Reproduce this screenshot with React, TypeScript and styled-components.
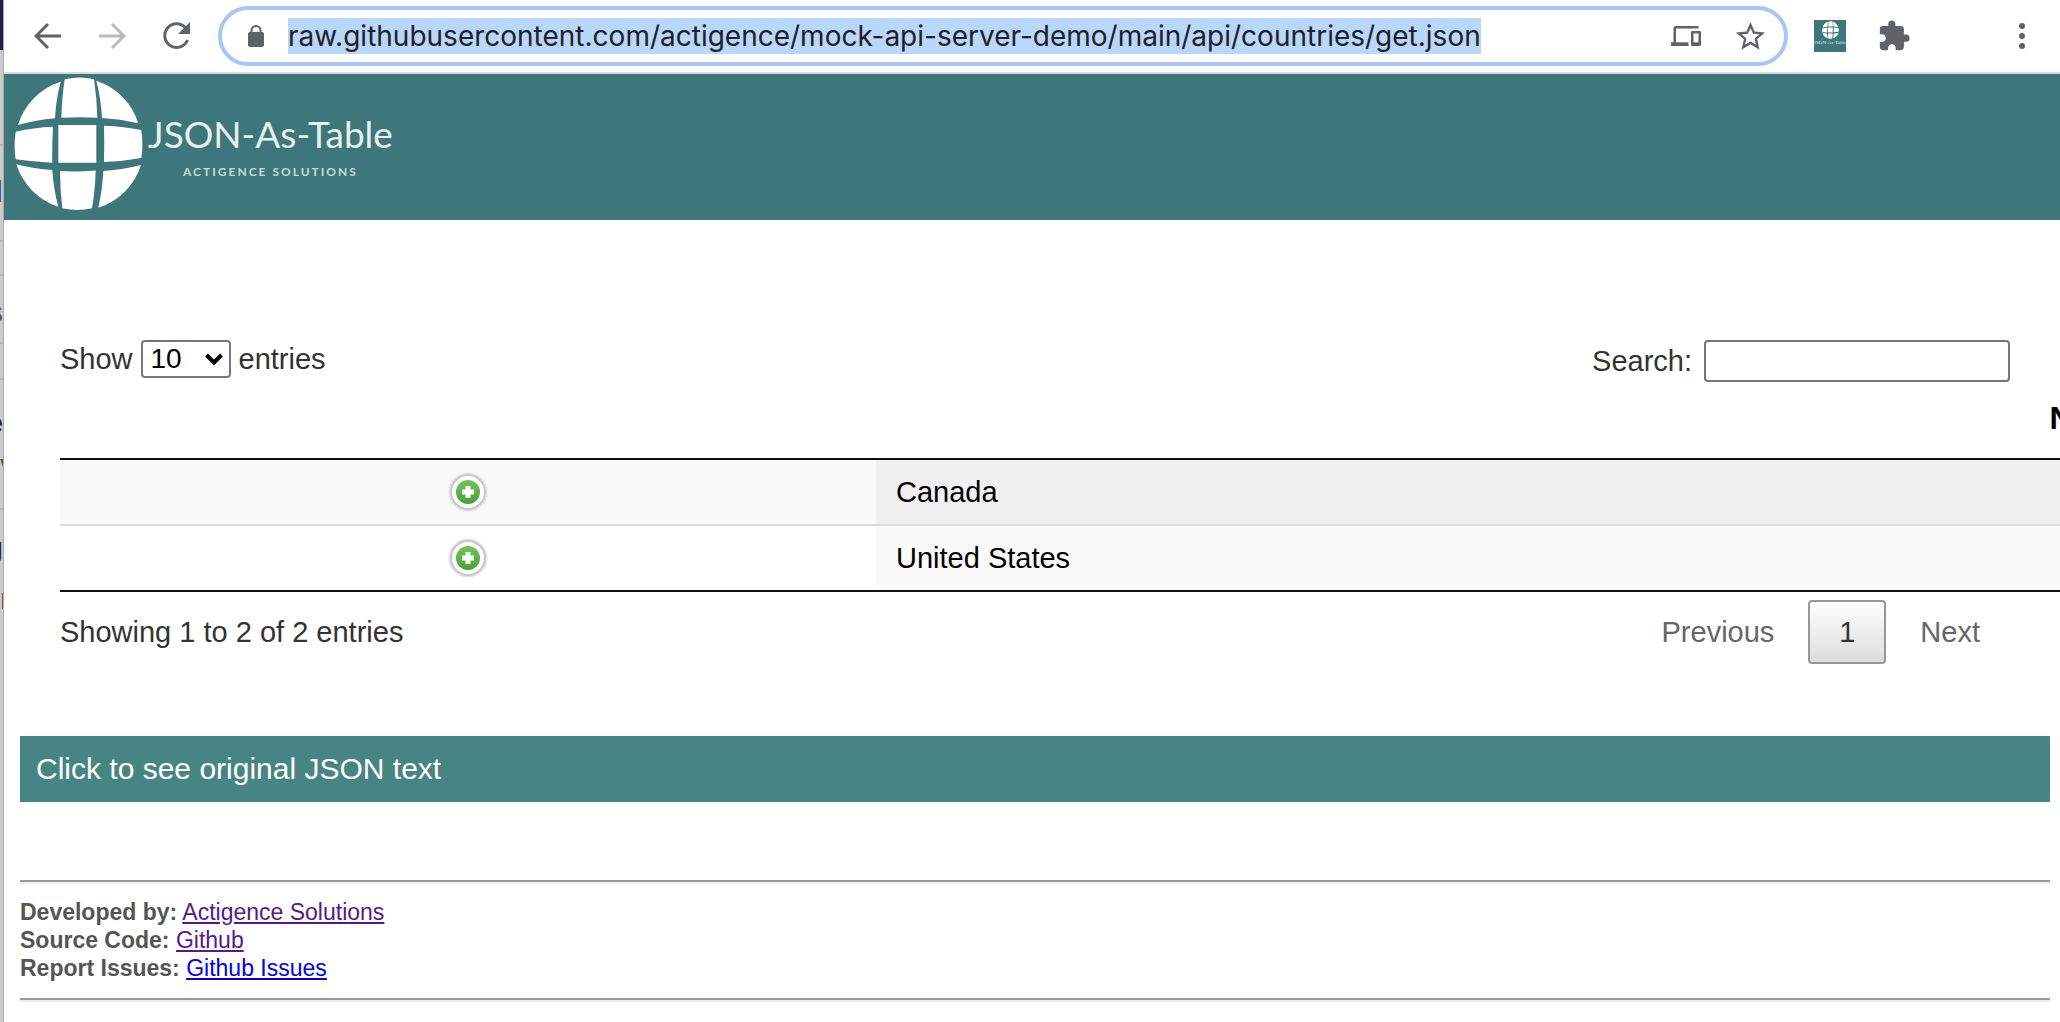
import React from "react";
import styled, { createGlobalStyle } from "styled-components";

const sans = `"Liberation Sans", Arial, Helvetica, sans-serif`;

const GlobalStyle = createGlobalStyle`
  *, *::before, *::after { box-sizing: border-box; }
  body { margin: 0; background: #fff; font-family: ${sans}; overflow: hidden; }
  button, input, select { font-family: inherit; }
`;

const Screen = styled.div`
  display: flex;
  min-height: 100vh;
`;

const Backdrop = styled.div`
  width: 4px;
  flex: none;
  overflow: hidden;
  display: flex;
  flex-direction: column;
  background: #cbcbcb;
  border-right: 1px solid #aaa;
`;

const BackdropCap = styled.div`
  flex: none;
  height: 50px;
  background: #1f1f4d;
`;

const BackdropRow = styled.div<{ $height: number; $bold?: boolean; $line?: boolean; $start?: boolean }>`
  flex: none;
  height: ${(p) => p.$height}px;
  display: flex;
  align-items: flex-end;
  justify-content: ${(p) => (p.$start ? "flex-start" : "flex-end")};
  font-size: 30px;
  line-height: 30px;
  font-weight: ${(p) => (p.$bold ? 700 : 400)};
  color: ${(p) => (p.$bold ? "#222" : "#555")};
  border-bottom: ${(p) => (p.$line ? "2px solid #b8b8b8" : "0")};
`;

const Window = styled.div`
  flex: 1;
  min-width: 0;
  display: flex;
  flex-direction: column;
  overflow: hidden;
`;

const Toolbar = styled.header`
  display: flex;
  align-items: center;
  height: 74px;
  padding: 0 18px 0 24px;
  border-bottom: 2px solid #d8dade;
`;

const IconButton = styled.button<{ $dim?: boolean }>`
  display: flex;
  align-items: center;
  justify-content: center;
  width: 40px;
  height: 40px;
  padding: 0;
  border: 0;
  background: none;
  color: ${(p) => (p.$dim ? "#bababc" : "#5f6368")};
`;

const NavButtons = styled.nav`
  display: flex;
  gap: 24px;
  margin-right: 22px;
`;

const AddressBar = styled.div`
  flex: 1;
  display: flex;
  align-items: center;
  height: 60px;
  padding: 0 14px 0 26px;
  border: 4px solid #a8c4f8;
  border-radius: 30px;
`;

const AddressInput = styled.input`
  field-sizing: content;
  height: 36px;
  margin: 0 auto 0 24px;
  padding: 0;
  border: 0;
  outline: 0;
  background: #b9d6fb;
  color: #202124;
  font-family: Inter, Roboto, sans-serif;
  font-size: 28px;
  line-height: 36px;
`;

const AddressActions = styled.div`
  display: flex;
  gap: 24px;
`;

const Extensions = styled.div`
  display: flex;
  align-items: center;
  gap: 28px;
  margin: 0 88px 0 26px;
`;

const ExtensionBadge = styled.span`
  display: flex;
  flex-direction: column;
  align-items: center;
  width: 32px;
  height: 32px;
  padding-top: 1px;
  background: #3e777b;
  color: #dfe9e9;
  font-family: "Liberation Serif", serif;
  font-size: 5px;
  line-height: 8px;
  white-space: nowrap;
`;

const Banner = styled.div`
  display: flex;
  align-items: center;
  gap: 4px;
  height: 146px;
  padding: 0 0 6px 10px;
  background: #3e777b;
  color: #fff;
`;

const Brand = styled.div`
  display: flex;
  flex-direction: column;
  align-items: center;
  gap: 8px;
  padding-top: 8px;
`;

const BrandName = styled.div`
  font-family: Lato, sans-serif;
  font-weight: 400;
  font-size: 37px;
  line-height: 40px;
  color: #e8f0f0;
`;

const BrandTag = styled.div`
  font-family: Lato, sans-serif;
  font-weight: 700;
  font-size: 12px;
  line-height: 20px;
  letter-spacing: 2px;
  color: #c8dada;
`;

const Content = styled.main`
  padding: 120px 10px 0 16px;
`;

const TableArea = styled.section`
  padding: 0 40px;
`;

const Controls = styled.div`
  display: flex;
  justify-content: space-between;
  align-items: flex-start;
  font-size: 29px;
  color: #333;
`;

const LengthControl = styled.label`
  display: flex;
  align-items: center;
  gap: 8px;
  line-height: 36px;
`;

const SelectBox = styled.span`
  display: inline-grid;
  align-items: center;
  color: #000;
  & > * { grid-area: 1 / 1; }
  & > svg { justify-self: end; margin-right: 8px; pointer-events: none; }
`;

const LengthSelect = styled.select`
  appearance: none;
  width: 90px;
  height: 38px;
  padding: 0 8px;
  border: 2px solid #767676;
  border-radius: 4px;
  background: #fff;
  color: #000;
  font-size: 28px;
  line-height: 34px;
`;

const SearchControl = styled.label`
  display: flex;
  align-items: center;
  gap: 12px;
`;

const SearchInput = styled.input`
  width: 306px;
  height: 42px;
  border: 2px solid #767676;
  border-radius: 4px;
  font-size: 29px;
`;

const DataTable = styled.table`
  width: 3250px;
  table-layout: fixed;
  border-collapse: separate;
  border-spacing: 0;
  border-bottom: 2px solid #111;
  color: #000;
  font-size: 29px;
  line-height: 32px;
`;

const HeadCell = styled.th`
  padding: 16px 36px 20px;
  border-bottom: 2px solid #111;
  font-size: 32px;
  line-height: 40px;
  text-align: center;
`;

const Row = styled.tr`
  & > td { padding: 16px 20px; }
  &:nth-child(odd) > td { background: #f0f0f0; }
  &:nth-child(odd) > td:first-child { background: #f9f9f9; }
  &:nth-child(even) > td { background: #fafafa; }
  &:nth-child(even) > td:first-child { background: #fff; }
  & + & > td { border-top: 2px solid #ddd; }
`;

const ExpandButton = styled.button`
  display: block;
  width: 40px;
  height: 40px;
  margin: -4px auto;
  padding: 0;
  border: 0;
  background: none;
`;

const TableFooter = styled.div`
  display: flex;
  justify-content: space-between;
  align-items: center;
  padding-top: 8px;
  color: #333;
  font-size: 29px;
`;

const Pagination = styled.div`
  display: flex;
  gap: 4px;
`;

const PageButton = styled.button<{ $current?: boolean }>`
  min-width: 78px;
  height: 64px;
  padding: 0 28px;
  border: 2px solid ${(p) => (p.$current ? "#979797" : "transparent")};
  border-radius: 4px;
  background: ${(p) => (p.$current ? "linear-gradient(#fff, #dcdcdc)" : "none")};
  color: ${(p) => (p.$current ? "#333" : "#666")};
  font-size: 29px;
`;

const JsonToggle = styled.button`
  display: block;
  width: 100%;
  margin: 72px 0 78px;
  padding: 16px;
  border: 0;
  background: #478584;
  color: #fff;
  font-size: 30px;
  line-height: 34px;
  text-align: left;
`;

const Rule = styled.hr`
  height: 4px;
  margin: 0;
  border: 0;
  border-top: 2px solid #999;
  background: #eee;
`;

const Credits = styled.div`
  padding: 14px 0 16px;
  color: #555;
  font-size: 23px;
  line-height: 28px;
`;

const CreditLink = styled.a<{ $visited?: boolean }>`
  color: ${(p) => (p.$visited ? "#551a8b" : "#0000ee")};
`;

const Globe = ({ width, height }: { width: number; height: number }) => (
  <svg width={width} height={height} viewBox="0 0 130 134" fill="#fff" aria-hidden="true">
    <path d="M46.700 4.700 A64.500 66 0 0 0 4 48 Q22 43 41 41.300 Q42 22 46.700 4.700Z" />
    <path d="M50.700 2.300 A64.500 66 0 0 1 80 2.300 Q83 22 83.300 40.700 Q66 39.700 47.300 40.700 Q48 20 50.700 2.300Z" />
    <path d="M82.300 3.700 A64.500 66 0 0 1 124.300 46.300 Q106 42 88 41 Q87 22 82.300 3.700Z" />
    <path d="M1.700 54.700 Q20 50.500 39 49.700 Q38 68 38.300 85.700 Q20 85 1.700 82.300 Q-0.500 69 1.700 54.700Z" />
    <path d="M44.300 48 H82.300 V85.700 H44.300Z" />
    <path d="M90 48.700 Q110 49.500 127.300 53 Q129.500 68 127.300 81 Q108 84.500 90 85 Q90.500 66 90 48.700Z" />
    <path d="M2.300 87.300 Q20 92 38.300 93 Q39.500 112 44.300 129.700 A64.500 66 0 0 1 2.300 87.300Z" />
    <path d="M46 94 Q64 95 81.700 93.500 Q81 114 78 131.300 A64.500 66 0 0 1 48.300 131.300 Q46 112 46 94Z" />
    <path d="M89.300 94 Q110 92.500 127 88 A64.500 66 0 0 1 84.300 130.700 Q88.500 112 89.300 94Z" />
  </svg>
);

const PlusIcon = () => (
  <svg width="40" height="40" viewBox="0 0 40 40" aria-hidden="true">
    <defs>
      <linearGradient id="plusGreen" x1="0" y1="0" x2="0" y2="1">
        <stop offset="0" stopColor="#72c35a" />
        <stop offset="1" stopColor="#4b9f38" />
      </linearGradient>
    </defs>
    <circle cx="20" cy="20" r="18" fill="#fff" stroke="#e4e4e4" strokeWidth="3" />
    <circle cx="20" cy="20" r="17" fill="none" stroke="#c9c9c9" strokeWidth="2" />
    <circle cx="20" cy="20" r="12" fill="url(#plusGreen)" />
    <path d="M20 14v12M14 20h12" stroke="#fff" strokeWidth="5" />
  </svg>
);

const countries = ["Canada", "United States"];

const credits = [
  { label: "Developed by:", link: "Actigence Solutions", visited: true },
  { label: "Source Code:", link: "Github", visited: true },
  { label: "Report Issues:", link: "Github Issues", visited: false },
];

export default function App() {
  return (
    <>
      <GlobalStyle />
      <Screen>
        <Backdrop aria-hidden="true">
          <BackdropCap />
          <BackdropRow $height={96} $line />
          <BackdropRow $height={61}>d</BackdropRow>
          <BackdropRow $height={35} $line />
          <BackdropRow $height={34} $line />
          <BackdropRow $height={51}>s</BackdropRow>
          <BackdropRow $height={17} $line />
          <BackdropRow $height={36} $line />
          <BackdropRow $height={58} $bold>e</BackdropRow>
          <BackdropRow $height={42} $start>v</BackdropRow>
          <BackdropRow $height={30} $line />
          <BackdropRow $height={53} $bold>g</BackdropRow>
          <BackdropRow $height={51} $start>r</BackdropRow>
        </Backdrop>
        <Window>
          <Toolbar>
            <NavButtons>
              <IconButton aria-label="Back">
                <svg width="28" height="28" viewBox="0 0 28 28" fill="none" stroke="currentColor" strokeWidth="3">
                  <path d="M27 14H3M14 2L2 14L14 26" />
                </svg>
              </IconButton>
              <IconButton aria-label="Forward" $dim>
                <svg width="28" height="28" viewBox="0 0 28 28" fill="none" stroke="currentColor" strokeWidth="3">
                  <path d="M1 14H25M14 2L26 14L14 26" />
                </svg>
              </IconButton>
              <IconButton aria-label="Reload">
                <svg width="28" height="28" viewBox="0 0 28 28" fill="none">
                  <path d="M23.500 6 A11.800 11.800 0 1 0 25.500 18" stroke="currentColor" strokeWidth="3" />
                  <path d="M28 0V12H16Z" fill="currentColor" />
                </svg>
              </IconButton>
            </NavButtons>
            <AddressBar>
              <svg width="16" height="22" viewBox="0 0 16 22" aria-hidden="true">
                <path d="M3.500 9V5.500a4.500 4.500 0 0 1 9 0V9" fill="none" stroke="#5f6368" strokeWidth="2" />
                <rect y="7" width="16" height="15" rx="2" fill="#5f6368" />
              </svg>
              <AddressInput
                aria-label="Address"
                defaultValue="raw.githubusercontent.com/actigence/mock-api-server-demo/main/api/countries/get.json"
              />
              <AddressActions>
                <IconButton aria-label="Send to your devices">
                  <svg width="30" height="30" viewBox="0 0 24 24" fill="currentColor">
                    <path d="M4 6h18V4H4c-1.100 0-2 .9-2 2v11H0v3h14v-3H4V6zm19 2h-6c-.55 0-1 .45-1 1v10c0 .55.45 1 1 1h6c.55 0 1-.45 1-1V9c0-.55-.45-1-1-1zm-1 9h-4v-7h4v7z" />
                  </svg>
                </IconButton>
                <IconButton aria-label="Bookmark this page">
                  <svg width="35" height="35" viewBox="0 0 24 24" fill="currentColor">
                    <path d="M22 9.240l-7.190-.62L12 2 9.190 8.630 2 9.240l5.460 4.730L5.820 21 12 17.270 18.180 21l-1.630-7.030L22 9.240zM12 15.400l-3.760 2.270 1-4.280-3.320-2.880 4.380-.38L12 6.100l1.710 4.040 4.380.38-3.320 2.880 1 4.280L12 15.400z" />
                  </svg>
                </IconButton>
              </AddressActions>
            </AddressBar>
            <Extensions>
              <ExtensionBadge>
                <Globe width={17} height={18} />
                JSON-As-Table
              </ExtensionBadge>
              <IconButton aria-label="Extensions">
                <svg width="34" height="34" viewBox="0 0 24 24" fill="currentColor">
                  <path d="M20.500 11H19V7c0-1.100-.9-2-2-2h-4V3.500a2.500 2.500 0 0 0-5 0V5H4c-1.100 0-1.990.9-1.990 2v3.800H3.500c1.490 0 2.700 1.210 2.700 2.700s-1.210 2.700-2.700 2.700H2V20c0 1.100.9 2 2 2h3.800v-1.500c0-1.490 1.210-2.700 2.700-2.700s2.700 1.210 2.700 2.700V22H17c1.100 0 2-.9 2-2v-4h1.500a2.500 2.500 0 0 0 0-5z" />
                </svg>
              </IconButton>
            </Extensions>
            <IconButton aria-label="Menu">
              <svg width="8" height="28" viewBox="0 0 8 28" fill="currentColor">
                <circle cx="4" cy="4" r="3" />
                <circle cx="4" cy="14" r="3" />
                <circle cx="4" cy="24" r="3" />
              </svg>
            </IconButton>
          </Toolbar>
          <Banner>
            <Globe width={130} height={134} />
            <Brand>
              <BrandName>JSON-As-Table</BrandName>
              <BrandTag>ACTIGENCE SOLUTIONS</BrandTag>
            </Brand>
          </Banner>
          <Content>
            <TableArea>
              <Controls>
                <LengthControl>
                  Show
                  <SelectBox>
                    <LengthSelect defaultValue="10">
                      <option>10</option>
                      <option>25</option>
                      <option>50</option>
                    </LengthSelect>
                    <svg width="18" height="12" viewBox="0 0 18 12" fill="none" stroke="#000" strokeWidth="4">
                      <path d="M1.500 2L9 9.500L16.500 2" />
                    </svg>
                  </SelectBox>
                  entries
                </LengthControl>
                <SearchControl>
                  Search:
                  <SearchInput type="search" />
                </SearchControl>
              </Controls>
              <DataTable>
                <colgroup>
                  <col style={{ width: 816 }} />
                  <col />
                </colgroup>
                <thead>
                  <tr>
                    <HeadCell />
                    <HeadCell>Name</HeadCell>
                  </tr>
                </thead>
                <tbody>
                  {countries.map((name) => (
                    <Row key={name}>
                      <td>
                        <ExpandButton aria-label={`Expand ${name}`}>
                          <PlusIcon />
                        </ExpandButton>
                      </td>
                      <td>{name}</td>
                    </Row>
                  ))}
                </tbody>
              </DataTable>
              <TableFooter>
                <span>Showing 1 to 2 of 2 entries</span>
                <Pagination>
                  <PageButton>Previous</PageButton>
                  <PageButton $current>1</PageButton>
                  <PageButton>Next</PageButton>
                </Pagination>
              </TableFooter>
            </TableArea>
            <JsonToggle>Click to see original JSON text</JsonToggle>
            <Rule />
            <Credits>
              {credits.map((c) => (
                <div key={c.label}>
                  <strong>{c.label}</strong>{" "}
                  <CreditLink href="#" $visited={c.visited}>{c.link}</CreditLink>
                </div>
              ))}
            </Credits>
            <Rule />
          </Content>
        </Window>
      </Screen>
    </>
  );
}
